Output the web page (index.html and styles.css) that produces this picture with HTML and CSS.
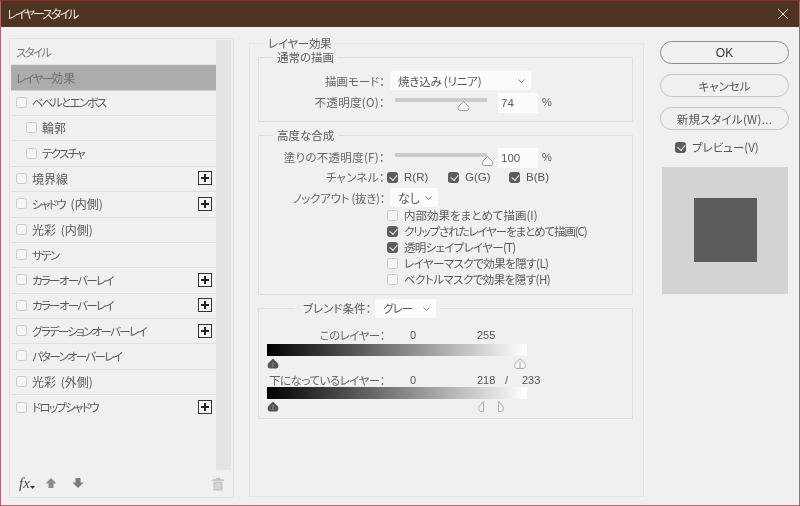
FILE: index.html
```html
<!DOCTYPE html>
<html lang="ja">
<head>
<meta charset="utf-8">
<title>レイヤースタイル</title>
<link rel="stylesheet" href="styles.css">
</head>
<body>
<div class="window">
  <header class="titlebar">
    <span>レイヤースタイル</span>
    <svg class="close" width="12" height="12" viewBox="0 0 12 12"><path d="M1 1l10 10M11 1L1 11" stroke="#e8e4e0" stroke-width="1" fill="none"/></svg>
  </header>
  <main class="main">
    <aside class="panel">
      <div class="list-wrap">
        <ul class="list">
          <li class="row">スタイル</li>
          <li class="row selected"><span>レイヤー<span class="kj">効果</span></span></li>
          <li class="row"><i class="cb"></i>ベベルとエンボス</li>
          <li class="row sub"><i class="cb"></i><span class="kj">輪郭</span></li>
          <li class="row sub"><i class="cb"></i>テクスチャ</li>
          <li class="row"><i class="cb"></i><span class="kj">境界線</span><b class="plus"></b></li>
          <li class="row"><i class="cb"></i><span>シャドウ <span class="kj paren">(内側)</span></span><b class="plus"></b></li>
          <li class="row"><i class="cb"></i><span class="kj">光彩 (内側)</span></li>
          <li class="row"><i class="cb"></i>サテン</li>
          <li class="row"><i class="cb"></i>カラーオーバーレイ<b class="plus"></b></li>
          <li class="row"><i class="cb"></i>カラーオーバーレイ<b class="plus"></b></li>
          <li class="row"><i class="cb"></i>グラデーションオーバーレイ<b class="plus"></b></li>
          <li class="row"><i class="cb"></i>パターンオーバーレイ</li>
          <li class="row"><i class="cb"></i><span class="kj">光彩 (外側)</span></li>
          <li class="row"><i class="cb"></i>ドロップシャドウ<b class="plus"></b></li>
        </ul>
        <div class="scrollbar"></div>
      </div>
      <footer class="tools">
        <span class="fx">fx<svg width="5" height="3" viewBox="0 0 5 3"><path d="M0 0h5L2.500 3z" fill="#333"/></svg></span>
        <svg class="tool" width="12" height="12" viewBox="0 0 12 12"><path d="M6 1l5.500 5.500H8.500V11h-5V6.500H.5z" fill="#8c8c8c"/></svg>
        <svg class="tool" width="12" height="12" viewBox="0 0 12 12"><path d="M6 11L.5 5.500h3V1h5v4.500h3z" fill="#7c7c7c"/></svg>
        <svg class="tool trash" width="12" height="14" viewBox="0 0 12 14"><path d="M4 1.500h4M.5 3h11" stroke="#bdbdbd" stroke-width="1.500" fill="none"/><path d="M1.500 4.500h9V13.500h-9z" fill="#c4c4c4"/><path d="M4 6v6M6 6v6M8 6v6" stroke="#e6e6e6" stroke-width="1" fill="none"/></svg>
      </footer>
    </aside>

    <fieldset class="outer">
      <legend class="legend">レイヤー効果</legend>
      <fieldset class="group normal">
        <legend class="legend">通常の描画</legend>
        <div class="line mode-line">
          <span class="label">描画モード：</span>
          <span class="select wide">焼き込み (リニア)<svg class="chev" width="7" height="4" viewBox="0 0 7 4"><path d="M.5.500l3 3 3-3" stroke="#777" fill="none"/></svg></span>
        </div>
        <div class="line slider-line">
          <span class="label">不透明度(O)：</span>
          <span class="slider"><svg class="thumb at74" width="13" height="10" viewBox="0 0 13 10"><path d="M6.500.5L11 5C12.500 6.500 12 9.500 10 9.500H3C1 9.500 .5 6.500 2 5z" fill="#f4f4f4" stroke="#a0a0a0"/></svg></span>
          <span class="num">74</span><span class="pct">%</span>
        </div>
      </fieldset>
      <fieldset class="group advanced">
        <legend class="legend">高度な合成</legend>
        <div class="line slider-line">
          <span class="label">塗りの不透明度(F)：</span>
          <span class="slider"><svg class="thumb at100" width="13" height="10" viewBox="0 0 13 10"><path d="M6.500.5L11 5C12.500 6.500 12 9.500 10 9.500H3C1 9.500 .5 6.500 2 5z" fill="#f4f4f4" stroke="#a0a0a0"/></svg></span>
          <span class="num">100</span><span class="pct">%</span>
        </div>
        <div class="line channel-line">
          <span class="label">チャンネル：</span>
          <span class="channel"><i class="cb on"></i>R(R)</span>
          <span class="channel"><i class="cb on"></i>G(G)</span>
          <span class="channel"><i class="cb on"></i>B(B)</span>
        </div>
        <div class="line knock-line">
          <span class="label">ノックアウト (抜き)：</span>
          <span class="select narrow">なし<svg class="chev" width="7" height="4" viewBox="0 0 7 4"><path d="M.5.500l3 3 3-3" stroke="#777" fill="none"/></svg></span>
        </div>
        <ul class="checks">
          <li><i class="cb"></i>内部効果をまとめて描画(I)</li>
          <li class="tighter"><i class="cb on"></i>クリップされたレイヤーをまとめて描画(C)</li>
          <li class="tight"><i class="cb on"></i>透明シェイプレイヤー(T)</li>
          <li class="tight2"><i class="cb"></i>レイヤーマスクで効果を隠す(L)</li>
          <li class="tight2"><i class="cb"></i>ベクトルマスクで効果を隠す(H)</li>
        </ul>
      </fieldset>
      <fieldset class="group blend">
        <legend class="legend blend-legend">
          <span class="blend-label">ブレンド条件：</span>
          <span class="select gray">グレー<svg class="chev" width="7" height="4" viewBox="0 0 7 4"><path d="M.5.500l3 3 3-3" stroke="#777" fill="none"/></svg></span>
        </legend>
        <div class="line values">
          <span class="label">このレイヤー：</span>
          <span class="v0">0</span><span class="v1">255</span>
        </div>
        <div class="ramp"></div>
        <div class="thumbs">
          <svg width="12" height="11" viewBox="0 0 12 11"><path d="M6 .5L10.500 5C12 6.800 11.500 10.500 9 10.500H3C.5 10.500 0 6.800 1.500 5z" fill="#555"/><path d="M6 4v5" stroke="#888"/></svg>
          <svg class="t255" width="12" height="11" viewBox="0 0 12 11"><path d="M6 .5L10.500 5C12 6.800 11.500 10.500 9 10.500H3C.5 10.500 0 6.800 1.500 5z" fill="#f5f5f5" stroke="#aaa"/><path d="M6 3v7" stroke="#aaa"/></svg>
        </div>
        <div class="line values under">
          <span class="label">下になっているレイヤー：</span>
          <span class="v0">0</span><span class="v1">218</span><span class="slash">/</span><span class="v2">233</span>
        </div>
        <div class="ramp"></div>
        <div class="thumbs">
          <svg width="12" height="11" viewBox="0 0 12 11"><path d="M6 .5L10.500 5C12 6.800 11.500 10.500 9 10.500H3C.5 10.500 0 6.800 1.500 5z" fill="#555"/><path d="M6 4v5" stroke="#888"/></svg>
          <svg class="t218" width="7" height="11" viewBox="0 0 7 11"><path d="M5.500 .5V10.500H3C.5 10.500 .2 7 1.500 5z" fill="#f5f5f5" stroke="#aaa"/></svg>
          <svg class="t233" width="7" height="11" viewBox="0 0 7 11"><path d="M1.500 .5V10.500H4C6.500 10.500 6.800 7 5.500 5z" fill="#f5f5f5" stroke="#aaa"/></svg>
        </div>
      </fieldset>
    </fieldset>

    <aside class="actions">
      <button class="btn primary">OK</button>
      <button class="btn">キャンセル</button>
      <button class="btn wide-text">新規スタイル(W)...</button>
      <div class="preview-check"><i class="cb on"></i>プレビュー(V)</div>
      <div class="preview"><div class="swatch"></div></div>
    </aside>
  </main>
</div>
</body>
</html>
```

FILE: styles.css
```css
* { box-sizing: border-box; }
html, body { margin: 0; padding: 0; }
body {
  width: 800px;
  height: 506px;
  overflow: hidden;
  background: #f0f0f0;
  font-family: "Noto Sans CJK JP", "Noto Sans", sans-serif;
  font-size: 11.5px;
  font-feature-settings: "palt";
  color: #5a5a5a;
}
ul { list-style: none; margin: 0; padding: 0; }

.window {
  width: 800px;
  height: 506px;
  border: 1px solid #b8626a;
  border-top-color: #8f2a1e;
  display: flex;
  flex-direction: column;
  background: #f0f0f0;
  filter: blur(0.3px);
}
.titlebar {
  height: 26px;
  flex: none;
  background: #4f3521;
  color: #ece6e0;
  font-size: 12px;
  letter-spacing: -2px;
  display: flex;
  align-items: center;
  justify-content: space-between;
  padding: 0 10px 2px 6px;
}
.close { margin-top: 2px; }
.main {
  flex: 1;
  display: flex;
  align-items: flex-start;
  padding: 11px 10px 0 8px;
}

/* left panel */
.panel {
  width: 225px;
  height: 460px;
  flex: none;
  border: 1px solid #e2e2e2;
  padding: 1px 1px 0 1px;
  display: flex;
  flex-direction: column;
}
.list-wrap { display: flex; height: 430px; flex: none; }
.list { width: 205px; flex: none; }
.scrollbar { width: 15px; background: #e3e3e3; }
.row {
  height: 25.36px;
  display: flex;
  align-items: center;
  gap: 5px;
  padding: 0 4px 1px 5px;
  border-bottom: 1px solid #e0e0e0;
  font-size: 11.5px;
  letter-spacing: -1.7px;
  color: #585858;
  white-space: pre;
}
.kj { letter-spacing: 0; font-size: 12px; word-spacing: 2px; }
.paren { margin-left: 5px; }
.row:first-child { color: #777; }
.row:last-child { border-bottom: 0; }
.row.selected { background: #acacac; color: #6e6e6e; border-bottom-color: #cfcfcf; }
.row.sub { padding-left: 15px; }
.cb {
  display: inline-block;
  width: 11px;
  height: 11px;
  flex: none;
  background: #f6f6f6;
  border: 1px solid #cbcbcb;
  border-radius: 2.500px;
}
.cb.on {
  background-color: #5c5c5c;
  border-color: #5c5c5c;
  position: relative;
}
.cb.on::after {
  content: "";
  position: absolute;
  left: 2.500px;
  top: 0.500px;
  width: 3.500px;
  height: 6px;
  border: solid #f4f4f4;
  border-width: 0 1.500px 1.500px 0;
  transform: rotate(40deg);
}
.plus {
  margin-left: auto;
  width: 14px;
  height: 14px;
  flex: none;
  border: 1px solid #333;
  background:
    linear-gradient(#222, #222) center / 8px 2px no-repeat,
    linear-gradient(#222, #222) center / 2px 8px no-repeat,
    #f6f6f6;
}
.tools {
  flex: 1;
  display: flex;
  align-items: center;
  padding: 0 8px 0 8px;
}
.fx {
  font-family: "Liberation Serif", serif;
  font-style: italic;
  font-size: 15px;
  color: #444;
  width: 26px;
  display: flex;
  align-items: flex-end;
}
.fx svg { margin-bottom: 3px; }
.tool { margin-right: 15px; margin-top: -1px; }
.trash { margin-left: auto; margin-right: 0; margin-top: 0; }

/* middle */
.outer {
  width: 395px;
  height: 460px;
  flex: none;
  margin: 0 0 0 15px;
  padding: 0 10px 0 8px;
  border: 1px solid #e4e4e4;
  position: relative;
  top: -1px;
  min-width: 0;
}
.legend {
  padding: 0 4px;
  margin-left: 14px;
  line-height: 14px;
  font-size: 11.500px;
  color: #5a5a5a;
}
.outer > .legend { margin-left: 6px; letter-spacing: -0.300px; line-height: 12px; }
.group {
  min-width: 0;
  margin: 0;
  border: 1px solid #dedede;
  padding: 0;
}
.normal { height: 72px; margin-top: 1px; }
.advanced { height: 167px; margin-top: 6px; }
.blend { height: 120px; margin-top: 4px; }

.line {
  display: flex;
  align-items: center;
}
.label {
  width: 128px;
  flex: none;
  text-align: right;
  padding-right: 2px;
  color: #666;
}
.select {
  background: #fcfcfc;
  height: 19px;
  display: inline-flex;
  align-items: center;
  justify-content: space-between;
  padding: 0 6px 0 8px;
  border-radius: 2px;
  color: #555;
}
.wide { width: 141px; margin-left: 3px; letter-spacing: -0.200px; font-size: 11.500px; }
.narrow { width: 48px; margin-left: 3px; font-size: 12px; }
.gray { width: 61px; margin-left: 4px; letter-spacing: -1px; }
.mode-line { margin-top: 7px; }
.slider-line { height: 20px; }
.slider-line .label, .channel-line .label { letter-spacing: 0.300px; }
.normal .slider-line { margin-top: 2px; }
.slider {
  width: 92px;
  height: 4px;
  margin-left: 8px;
  margin-top: -5px;
  background: #cbcbcb;
  position: relative;
}
.thumb { position: absolute; top: 3px; }
.at74 { left: 62px; }
.at100 { left: 86px; }
.num {
  width: 40px;
  height: 20px;
  margin-left: 11px;
  margin-top: 2px;
  background: #fcfcfc;
  padding: 0 3px;
  line-height: 20px;
  font-family: "Liberation Sans", sans-serif;
  font-size: 11.500px;
}
.pct { margin-left: 4px; font-family: "Liberation Sans", sans-serif; font-size: 11px; }
.advanced .slider-line { margin-top: 5px; }
.channel-line { height: 20px; }
.channel {
  display: inline-flex;
  align-items: center;
  gap: 6px;
  width: 61px;
  font-family: "Liberation Sans", sans-serif;
  font-size: 11.500px;
  color: #555;
}
.channel:first-of-type { margin-left: 5px; }
.knock-line { height: 21px; }
.knock-line .label { letter-spacing: -0.300px; }
.checks { margin: -1px 0 0 128px; }
.checks li {
  height: 16px;
  display: flex;
  align-items: center;
  gap: 6px;
  white-space: nowrap;
}
.checks .tight { letter-spacing: -0.700px; }
.checks .tight2 { letter-spacing: -0.550px; }
.checks .tighter { letter-spacing: -1.100px; }

.blend-legend {
  display: flex;
  align-items: center;
  margin-left: 36px;
  padding: 0 4px 0 8px;
  line-height: 19px;
  height: 19px;
}
.values { height: 16px; margin-top: 9px; }
.values .label { letter-spacing: -0.500px; }
.v0 { margin-left: 23px; width: 65px; font-family: "Liberation Sans", sans-serif; font-size: 11px; color: #555; }
.v1 { width: 20px; margin-left: 2px; font-family: "Liberation Sans", sans-serif; font-size: 11px; color: #555; }
.slash { margin-left: 8px; width: 17px; font-family: "Liberation Sans", sans-serif; font-size: 11px; }
.v2 { font-family: "Liberation Sans", sans-serif; font-size: 11px; color: #555; }
.ramp {
  width: 260px;
  height: 12px;
  margin: 1px 0 0 8px;
  background: linear-gradient(90deg, #000, #fff);
}
.thumbs {
  height: 11px;
  margin: 2px 0 0 8px;
  position: relative;
}
.thumbs svg { position: absolute; top: 0; left: 0; }
.thumbs .t255 { left: 247px; }
.thumbs .t218 { left: 211px; }
.thumbs .t233 { left: 230px; }
.values.under { height: 15px; margin-top: 3px; }
.under + .ramp { margin-top: 0; }

/* right */
.actions {
  width: 129px;
  flex: none;
  margin-left: 16px;
  margin-top: 3px;
  display: flex;
  flex-direction: column;
}
.btn {
  height: 23px;
  margin-bottom: 10px;
  padding: 0;
  border: 1px solid #c4c4c4;
  border-radius: 12px;
  background: #f0f0f0;
  font-family: inherit;
  font-feature-settings: "palt";
  font-size: 11.500px;
  color: #555;
}
.wide-text { letter-spacing: 0.300px; }
.primary { border-color: #8e8e8e; color: #333; font-family: "Liberation Sans", sans-serif; font-size: 12px; }
.preview-check {
  display: flex;
  align-items: center;
  gap: 6px;
  padding-left: 15px;
  height: 16px;
  margin-top: -1px;
  color: #555;
}
.preview {
  margin: 12px 0 0 2px;
  width: 126px;
  height: 127px;
  background: #d3d3d3;
  display: flex;
  align-items: center;
  justify-content: center;
}
.swatch { width: 63px; height: 64px; margin-top: -2px; background: #5c5c5c; }
```
